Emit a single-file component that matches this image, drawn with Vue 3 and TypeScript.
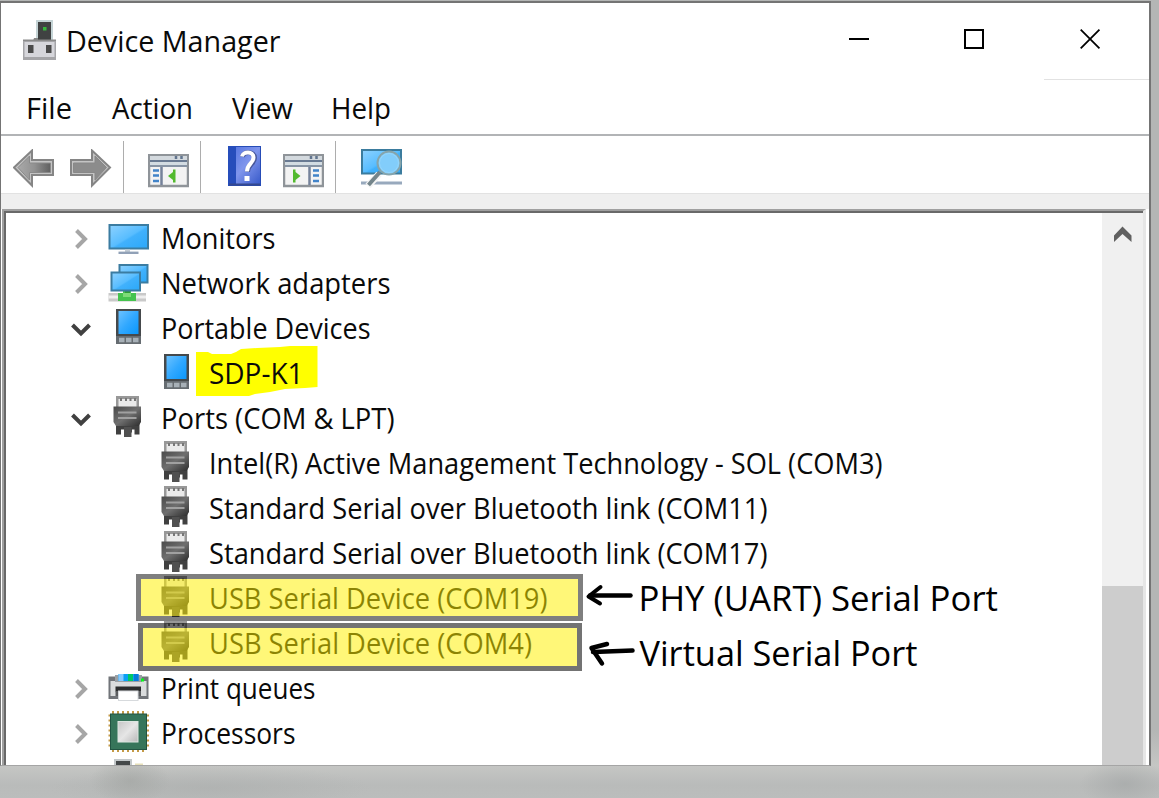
<script setup lang="ts">
interface Row {
  label: string
  len: number
  icon: 'monitor' | 'network' | 'phone' | 'plug' | 'printer' | 'cpu'
  state?: 'open' | 'closed'
  child?: boolean
}

interface Menu {
  label: string
  len: number
}

const menus: Menu[] = [
  { label: 'File', len: 46 },
  { label: 'Action', len: 81 },
  { label: 'View', len: 61 },
  { label: 'Help', len: 60 },
]

const rows: Row[] = [
  { label: 'Monitors', len: 114.5, icon: 'monitor', state: 'closed' },
  { label: 'Network adapters', len: 229.5, icon: 'network', state: 'closed' },
  { label: 'Portable Devices', len: 209.5, icon: 'phone', state: 'open' },
  { label: 'SDP-K1', len: 94.5, icon: 'phone', child: true },
  { label: 'Ports (COM & LPT)', len: 233.5, icon: 'plug', state: 'open' },
  { label: 'Intel(R) Active Management Technology - SOL (COM3)', len: 673.5, icon: 'plug', child: true },
  { label: 'Standard Serial over Bluetooth link (COM11)', len: 558.5, icon: 'plug', child: true },
  { label: 'Standard Serial over Bluetooth link (COM17)', len: 558.5, icon: 'plug', child: true },
  { label: 'USB Serial Device (COM19)', len: 338.5, icon: 'plug', child: true },
  { label: 'USB Serial Device (COM4)', len: 323, icon: 'plug', child: true },
  { label: 'Print queues', len: 154.5, icon: 'printer', state: 'closed' },
  { label: 'Processors', len: 134.5, icon: 'cpu', state: 'closed' },
]

const pins = [3, 8, 13, 18, 23, 28, 33]
</script>

<template>
  <div class="screen">
    <svg class="defs" width="0" height="0">
      <defs>
        <linearGradient id="blue" x1="0" y1="0" x2="1" y2="1">
          <stop offset="0" stop-color="#8ed2ff" />
          <stop offset=".5" stop-color="#58bdff" />
          <stop offset=".55" stop-color="#41b1fc" />
          <stop offset="1" stop-color="#2aa8fa" />
        </linearGradient>
        <linearGradient id="phoneBlue" x1="0" y1="0" x2="1" y2="1">
          <stop offset="0" stop-color="#6cc2ff" />
          <stop offset=".5" stop-color="#31a8ff" />
          <stop offset="1" stop-color="#0a97fb" />
        </linearGradient>
        <linearGradient id="plugBody" x1="0" y1="0" x2="1" y2="1">
          <stop offset="0" stop-color="#4a4a4a" />
          <stop offset=".5" stop-color="#6f6f6f" />
          <stop offset="1" stop-color="#2c2c2c" />
        </linearGradient>
        <linearGradient id="arrowFill" x1="0" y1="0" x2="1" y2="0">
          <stop offset="0" stop-color="#a9a9a9" />
          <stop offset=".5" stop-color="#929292" />
          <stop offset="1" stop-color="#606060" />
        </linearGradient>
        <linearGradient id="helpFill" x1="0" y1="0" x2="1" y2="1">
          <stop offset="0" stop-color="#4f70de" />
          <stop offset=".5" stop-color="#7f95ec" />
          <stop offset="1" stop-color="#3457c8" />
        </linearGradient>
        <linearGradient id="chip" x1="0" y1="0" x2="1" y2="1">
          <stop offset="0" stop-color="#c6c6c6" />
          <stop offset=".5" stop-color="#e6e6e6" />
          <stop offset="1" stop-color="#b8b8b8" />
        </linearGradient>
      </defs>
    </svg>

    <main class="window">
      <header class="titlebar">
        <svg class="app-icon" width="34" height="42" viewBox="0 0 34 42">
          <rect x="13" y="0" width="17" height="21" fill="#c5d4d6" />
          <rect x="15" y="2" width="13" height="18" fill="#404242" />
          <rect x="20" y="7" width="3.5" height="3.5" fill="#36b83c" />
          <path d="M11 18h4v3h-5z" fill="#888" />
          <rect x="0" y="20" width="33" height="20" fill="#a5a5a8" />
          <rect x="1.5" y="22" width="30" height="15" fill="#d6d6db" />
          <rect x="0" y="19.5" width="33" height="1.5" fill="#8a8a8a" />
          <rect x="5" y="25" width="5.5" height="8" fill="#4a4a4a" />
          <rect x="23" y="25" width="5.5" height="8" fill="#4a4a4a" />
        </svg>
        <svg class="label title" width="216" height="76">
          <text x="0" y="49" textLength="214.5" lengthAdjust="spacingAndGlyphs">Device Manager</text>
        </svg>
        <div class="controls">
          <svg class="control" width="115" height="77" viewBox="0 0 115 77">
            <path d="M29 36h20" stroke="#000" stroke-width="2" />
          </svg>
          <svg class="control" width="109" height="77" viewBox="0 0 109 77">
            <rect x="30" y="27" width="18" height="18" fill="none" stroke="#000" stroke-width="2" />
          </svg>
          <svg class="control close" width="105" height="77" viewBox="0 0 105 77">
            <path d="M36.500 27 55.500 46M55.500 27 36.500 46" stroke="#000" stroke-width="1.800" />
          </svg>
        </div>
      </header>

      <nav class="menubar">
        <svg v-for="m in menus" :key="m.label" class="label" :width="m.len" height="54">
          <text x="0" y="39" :textLength="m.len" lengthAdjust="spacingAndGlyphs">{{ m.label }}</text>
        </svg>
      </nav>

      <div class="toolbar">
        <svg class="back" width="42" height="40" viewBox="0 0 42 40">
          <path d="M1 18.500 19 1.500V11H40V26H19V36.500Z" fill="#c4c4c4" stroke="#858585" stroke-width="2" />
          <path d="M5 18.500 16.500 7V14H37.500V23.500H16.500V31Z" fill="url(#arrowFill)" stroke="#8a8a8a" stroke-width="1" />
        </svg>
        <svg class="forward" width="42" height="40" viewBox="0 0 42 40">
          <path d="M40 18.500 22 1.500V11H1V26H22V36.500Z" fill="#c4c4c4" stroke="#858585" stroke-width="2" />
          <path d="M36.500 18.500 25 7V14H3.500V23.500H25V31Z" fill="#8c8c8c" stroke="#888" stroke-width="1" />
        </svg>
        <i class="sep first"></i>
        <svg class="tree-icon" width="41" height="34" viewBox="0 0 41 34">
          <rect x="1" y="1" width="39" height="31" fill="#f3f3f3" stroke="#8f9499" stroke-width="2.500" />
          <rect x="2" y="2" width="37" height="4" fill="#d3d9de" />
          <rect x="2" y="6" width="37" height="2" fill="#697a92" />
          <path d="M28 2v3M33.500 2v3" stroke="#62758f" stroke-width="2.500" />
          <rect x="2" y="8" width="37" height="3" fill="#d3dce2" />
          <rect x="2" y="11" width="37" height="2" fill="#8794a5" />
          <path d="M13.500 13v18" stroke="#75829a" stroke-width="2.500" />
          <path d="M5 16.500h6M5 21.500h6M5 27h6" stroke="#4284c9" stroke-width="2.500" />
          <path d="M27.500 15.500v13h-2.500v-2.500l-5-4 5-4v-2.500z" fill="#52ba2e" />
        </svg>
        <i class="sep second"></i>
        <svg class="help-icon" width="34" height="41" viewBox="0 0 34 41">
          <rect x=".5" y=".5" width="32" height="39" fill="url(#helpFill)" stroke="#264cb7" />
          <rect x="0" y="0" width="8" height="40" fill="#264dbb" />
          <path d="M1 38.500h31" stroke="#34488e" stroke-width="2" />
          <path d="M14.500 11C15 5 26.500 5 26.500 12c0 6-7 6-7 14" fill="none" stroke="#48589a" stroke-width="5" />
          <path d="M14 10.500C15 5 25.500 5 25.500 11.500c0 6-6.500 6-6.500 14" fill="none" stroke="#fff" stroke-width="4" />
          <rect x="16.500" y="30" width="5" height="5" fill="#fff" />
        </svg>
        <svg class="action-icon" width="41" height="34" viewBox="0 0 41 34">
          <rect x="1" y="1" width="39" height="31" fill="#f3f3f3" stroke="#8f9499" stroke-width="2.500" />
          <rect x="2" y="2" width="37" height="4" fill="#d3d9de" />
          <rect x="2" y="6" width="37" height="2" fill="#697a92" />
          <path d="M28 2v3M33.500 2v3" stroke="#62758f" stroke-width="2.500" />
          <rect x="2" y="8" width="37" height="3" fill="#d3dce2" />
          <rect x="2" y="11" width="37" height="2" fill="#8794a5" />
          <path d="M26.500 13v18" stroke="#75829a" stroke-width="2.500" />
          <path d="M30 16.500h6M30 21.500h6M30 27h6" stroke="#4284c9" stroke-width="2.500" />
          <path d="M10 15.500v13h2.500v-2.500l5-4-5-4v-2.500z" fill="#52ba2e" />
        </svg>
        <i class="sep third"></i>
        <svg class="scan-icon" width="41" height="40" viewBox="0 0 41 40">
          <rect x="1" y="1" width="39" height="23.500" fill="url(#blue)" stroke="#3b7c9e" stroke-width="2" />
          <path d="M0 34h41" stroke="#98a9bd" stroke-width="3" />
          <path d="M18 25 7 37" stroke="#f4f4f4" stroke-width="7" />
          <path d="M19 23 7.500 36" stroke="#74858b" stroke-width="4" />
          <circle cx="28" cy="14" r="11.500" fill="#82cdfb" stroke="#86a4ab" stroke-width="2" />
          <circle cx="28" cy="14" r="9.500" fill="none" stroke="#96d6fc" />
        </svg>
      </div>

      <section class="band"></section>

      <section class="panel">
        <div class="tree">
          <div v-for="(r, i) in rows" :key="i" class="row" :class="{ child: r.child, ink: r.label === 'SDP-K1' }">
            <svg v-if="!r.child" class="chevron" width="22" height="45" viewBox="0 0 22 45">
              <path v-if="r.state === 'open'" d="M2.500 19 11 27.500 19.500 19" fill="none" stroke="#404040" stroke-width="4" />
              <path v-else d="M6.500 14.500 15 23 6.500 31.500" fill="none" stroke="#a6a6a6" stroke-width="4" />
            </svg>

            <svg class="icon" width="41" height="45" viewBox="0 0 41 45">
              <g v-if="r.icon === 'monitor'">
                <rect x="1.500" y="9" width="38.500" height="23.500" fill="url(#blue)" stroke="#3b7ca1" stroke-width="2" />
                <path d="M19.500 33.500v3" stroke="#c3ccd5" stroke-width="5" />
                <path d="M10.500 36.800h20" stroke="#91a1b7" stroke-width="2.400" />
              </g>
              <g v-else-if="r.icon === 'network'">
                <rect x="11.500" y="4" width="28" height="17.500" fill="url(#blue)" stroke="#3b7ca1" stroke-width="2" />
                <rect x="0.500" y="32" width="37.500" height="8.500" fill="#c9c9c9" />
                <rect x="0.500" y="34.500" width="37.500" height="3" fill="#eee" />
                <path d="M15 29h8v3h5v8H10v-8h5z" fill="#45c34e" />
                <path d="M17 29h5v3h-5z" fill="#2e9b37" />
                <path d="M15 32h8v4h-8z" fill="#7ddb78" />
                <rect x="3.500" y="11.500" width="28.500" height="18" fill="url(#blue)" stroke="#3b7ca1" stroke-width="2" />
              </g>
              <g v-else-if="r.icon === 'phone'">
                <rect x="8" y="3" width="25" height="35" fill="#45494c" />
                <rect x="10.500" y="5" width="20" height="23" fill="url(#phoneBlue)" />
                <rect x="8" y="30" width="25" height="8" fill="#666c71" />
                <path d="M11 34h5.500M18 34h5.500M25 34h5.500" stroke="#a7b0b7" stroke-width="4.500" />
              </g>
              <g v-else-if="r.icon === 'plug'">
                <rect x="8" y="0" width="23" height="12" fill="#989898" />
                <rect x="10.500" y="3" width="18" height="8" fill="#eaeaea" />
                <path d="M12 3.500h2M17 3.500h2M21.500 3.500h2M26 3.500h2" stroke="#777" stroke-width="3" />
                <path d="M8 27v11.500h5v-5h3v3h8v-3h2.500v5h5V27z" fill="#404040" />
                <path d="M5.500 10.500h27.500v15.500l-2.500 4h-22.500l-2.500-4z" fill="url(#plugBody)" />
                <path d="M10 16.500h18.500M10 22h18.500" stroke="#a0a0a0" stroke-width="1.800" />
                <path d="M16 31h7.500v10h-7.500z" fill="#505050" />
              </g>
              <g v-else-if="r.icon === 'printer'">
                <rect x="0.500" y="10.500" width="40" height="22.500" fill="#717479" />
                <rect x="2.500" y="15" width="36" height="15" fill="#dadcdd" />
                <rect x="7" y="9" width="27" height="7" fill="#9aa0a5" />
                <path d="M10.500 8h20v7h-20z" fill="#0aa0f5" />
                <path d="M10.500 8h5v7h-5z" fill="#85caff" />
                <path d="M20 8h5v7h-5z" fill="#00c768" />
                <path d="M26 8h4.500v7H26z" fill="#057bdc" />
                <rect x="33" y="12.500" width="3" height="3" fill="#08f51c" />
                <rect x="7.500" y="20.500" width="25.500" height="5" fill="#2b2c2d" />
                <rect x="7.500" y="25" width="25.500" height="5" fill="#5b5d60" />
                <rect x="10.500" y="25" width="19.500" height="9.500" fill="#fff" stroke="#d7dadd" />
              </g>
              <g v-else>
                <g stroke="#c49a46" stroke-width="2">
                  <path v-for="p in pins" :key="p" :d="`M${p + 2} 0v41M0.500 ${p + 1.5}h40.500`" />
                </g>
                <rect x="2.500" y="3" width="36" height="35.500" fill="#36755a" stroke="#225442" />
                <rect x="10" y="10.500" width="20" height="20.500" fill="url(#chip)" stroke="#dce6e0" />
              </g>
            </svg>

            <svg class="label" :width="r.len" height="45">
              <text x="0" y="33" :textLength="r.len" lengthAdjust="spacingAndGlyphs">{{ r.label }}</text>
            </svg>
          </div>
          <div class="row">
            <svg class="icon last" width="41" height="9" viewBox="0 0 41 9">
              <rect x="6" y="3" width="18" height="6" fill="#c3c8ca" />
              <rect x="8" y="5" width="14" height="4" fill="#444849" />
              <rect x="27" y="7.500" width="8" height="1.500" fill="#e6dfb9" />
            </svg>
          </div>
        </div>
        <div class="scrollbar">
          <svg class="up" width="41" height="373" viewBox="0 0 41 373">
            <path d="M12 29V22.500L20.500 13.500 29.500 22.500V29L20.500 21Z" fill="#606060" />
          </svg>
          <div class="thumb"></div>
        </div>
      </section>
    </main>

    <svg class="marker" width="124" height="54" viewBox="0 0 124 54">
      <path
        d="M1 5H13L17 7H36L41 5 46 2 62 1 85 0 95-1H122.500V40L110 41 90 42 75 45 60 47 54 49H1Z"
        fill="#ffff00"
      />
    </svg>
    <div class="box one"></div>
    <div class="box two"></div>
    <svg class="notes" width="440" height="110" viewBox="0 0 440 110">
      <g fill="none" stroke="#000" stroke-linecap="round" stroke-linejoin="round">
        <path d="M9 20.500H49.500" stroke-width="4.500" />
        <path d="M19.500 12 7.500 21.500 19 28.500" stroke-width="4" />
        <path d="M12 77 51.500 75.500" stroke-width="4.500" />
        <path d="M26 69 10.500 73 21 88.500" stroke-width="4.500" />
      </g>
      <text x="57.500" y="35.700" textLength="359.500" lengthAdjust="spacingAndGlyphs">PHY (UART) Serial Port</text>
      <text x="58.500" y="90.500" textLength="278" lengthAdjust="spacingAndGlyphs">Virtual Serial Port</text>
    </svg>
  </div>
</template>

<style>
html,
body {
  margin: 0;
  overflow: hidden;
}
</style>

<style scoped>
.screen {
  position: relative;
  box-sizing: border-box;
  width: 1159px;
  height: 798px;
  padding-top: 1px;
  overflow: hidden;
  background:
    radial-gradient(ellipse 40px 24px at 130px 781px, rgba(160, 163, 160, 0.6) 0, transparent 100%),
    radial-gradient(ellipse 160px 24px at 210px 788px, rgba(168, 171, 170, 0.5) 0, transparent 100%),
    radial-gradient(ellipse 45px 24px at 1125px 784px, rgba(165, 168, 168, 0.7) 0, transparent 100%),
    linear-gradient(#b4b6b5 0, #b4b6b5 730px, #c5c6c4 766px, #b9bbba 785px, #bbbdbc 798px);
  font-family: "Open Sans", "Noto Sans", sans-serif;
}

.defs {
  position: absolute;
}

.window {
  box-sizing: border-box;
  display: flex;
  flex-direction: column;
  width: 1151px;
  height: 765px;
  overflow: hidden;
  background: #fff;
  border: solid #747474;
  border-width: 2px 2px 1px 1px;
  border-bottom-color: #a5a5a5;
}

svg {
  display: block;
  flex: none;
}

.label {
  overflow: visible;
}

text {
  font-size: 28.8px;
  fill: #0a0a0a;
}

.titlebar {
  display: flex;
  height: 77px;
  flex: none;
}

.app-icon {
  margin: 17px 0 0 22px;
}

.title {
  margin-left: 8.500px;
}

.controls {
  display: flex;
  margin-left: auto;
}

.close {
  box-sizing: border-box;
  border-bottom: 1px solid #e2e2e2;
}

.menubar {
  display: flex;
  height: 54px;
  flex: none;
  padding-left: 24.500px;
  border-bottom: 2px solid #b2b4b6;
}

.menubar .label:nth-child(2) {
  margin-left: 40px;
}

.menubar .label:nth-child(3) {
  margin-left: 39px;
}

.menubar .label:nth-child(4) {
  margin-left: 38.500px;
}

.toolbar {
  display: flex;
  height: 57px;
  flex: none;
  align-items: flex-start;
  border-bottom: 1px solid #e2e2e2;
}

.back {
  margin: 13px 0 0 12px;
}

.forward {
  margin: 13px 0 0 15px;
}

.sep {
  width: 1px;
  height: 52px;
  margin-top: 5px;
  background: #adadad;
}

.first {
  margin-left: 11px;
}

.tree-icon {
  margin: 18px 0 0 24px;
}

.second {
  margin-left: 11px;
}

.help-icon {
  margin: 10px 0 0 27px;
}

.action-icon {
  margin: 18px 0 0 21px;
}

.third {
  margin-left: 11px;
}

.scan-icon {
  margin: 13px 0 0 25px;
}

.band {
  height: 15px;
  flex: none;
  background: #efefef;
}

.panel {
  position: relative;
  box-sizing: border-box;
  display: flex;
  height: 556px;
  flex: none;
  margin: 0 3px 0 1px;
  border: solid #a0a0a0;
  border-width: 2px 3px 0 2px;
  border-right-color: #e6e6e6;
}

.tree {
  flex: 1;
  min-width: 0;
  overflow: hidden;
  padding: 3px 0 0 64px;
  border: solid #696969;
  border-width: 2px 0 0 2px;
}

.row {
  display: flex;
  height: 45px;
}

.row .icon {
  margin-left: 16px;
}

.row.child .icon {
  margin-left: 85.500px;
}

.row .icon.last {
  margin-left: 38px;
}

.row .label {
  margin-left: 12.300px;
}

.ink .label {
  position: relative;
  z-index: 2;
}

.scrollbar {
  display: flex;
  flex-direction: column;
  width: 41px;
  flex: none;
  background: #f0f0f0;
  border-top: 2px solid #696969;
}

.thumb {
  flex: 1;
  background: #cdcdcd;
}

.marker {
  position: absolute;
  z-index: 1;
  left: 195px;
  top: 347px;
  overflow: visible;
}

.box {
  position: absolute;
  box-sizing: border-box;
  border: 5px solid rgba(0, 0, 0, 0.5);
  background: rgba(255, 240, 0, 0.53);
  background-clip: padding-box;
}

.one {
  left: 136px;
  top: 574px;
  width: 447px;
  height: 47px;
}

.two {
  left: 138px;
  top: 623px;
  width: 444px;
  height: 48px;
  border-color: rgba(0, 0, 0, 0.55);
}

.notes {
  position: absolute;
  left: 581px;
  top: 575px;
  overflow: visible;
}

.notes text {
  font-size: 35.5px;
  fill: #000;
}
</style>
